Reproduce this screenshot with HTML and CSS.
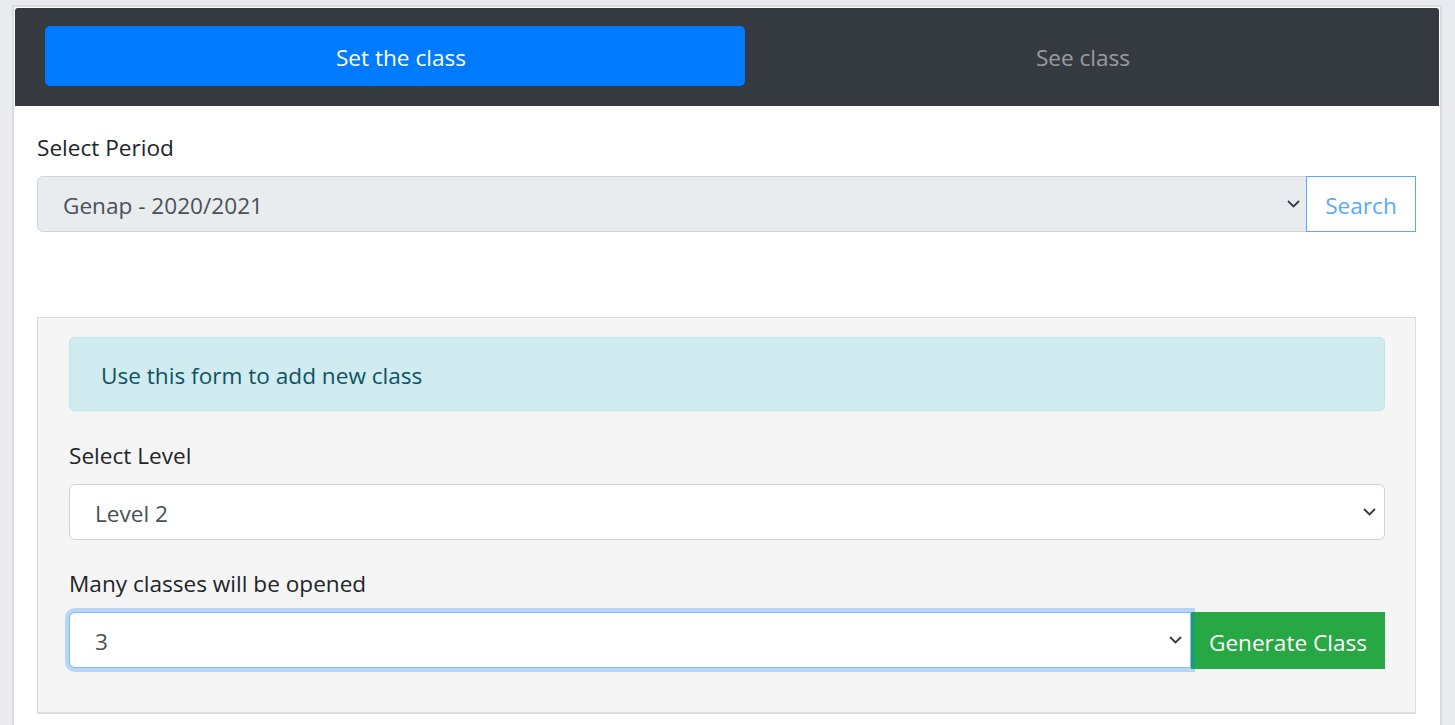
FILE: index.html
```html
<!DOCTYPE html>
<html lang="en">
<head>
<meta charset="utf-8">
<title>Set the class</title>
<link rel="stylesheet" href="styles.css">
</head>
<body>
<div class="page">
  <div class="card">
    <nav class="tabs">
      <a class="tab tab-active">Set the class</a>
      <a class="tab tab-muted">See class</a>
    </nav>
    <div class="card-body">
      <div class="label">Select Period</div>
      <div class="input-group">
        <div class="select select-disabled select-grow">
          <span>Genap - 2020/2021</span>
          <svg class="chev" width="13" height="8" viewBox="0 0 13 8"><path d="M1 1l5.5 5.5L12 1" fill="none" stroke="#343a40" stroke-width="1.8"/></svg>
        </div>
        <button class="btn-search">Search</button>
      </div>

      <div class="panel">
        <div class="alert">Use this form to add new class</div>

        <div class="label">Select Level</div>
        <div class="select select-level">
          <span>Level 2</span>
          <svg class="chev" width="13" height="8" viewBox="0 0 13 8"><path d="M1 1l5.5 5.5L12 1" fill="none" stroke="#343a40" stroke-width="1.8"/></svg>
        </div>

        <div class="label">Many classes will be opened</div>
        <div class="input-group">
          <div class="select select-focus select-grow">
            <span>3</span>
            <svg class="chev" width="13" height="8" viewBox="0 0 13 8"><path d="M1 1l5.5 5.5L12 1" fill="none" stroke="#343a40" stroke-width="1.8"/></svg>
          </div>
          <button class="btn-generate">Generate Class</button>
        </div>
      </div>
    </div>
  </div>
</div>
</body>
</html>
```

FILE: styles.css
```css
* { box-sizing: border-box; }

html, body {
  margin: 0;
  height: 100%;
}

body {
  background: #eaebf0;
  font-family: "Open Sans", "Noto Sans", sans-serif;
  font-size: 22.6px;
  color: #212529;
  overflow: hidden;
}

.page {
  padding: 5px 13px 0 12px;
}

.card {
  width: 1430px;
  background: #fff;
  border: 2px solid #dcdcdf;
  border-bottom: none;
  padding: 1px 1px 0 1px;
  min-height: 730px;
}

.tabs {
  display: flex;
  background: #343a40;
  border-top-left-radius: 3px;
  border-top-right-radius: 3px;
  padding: 18px 18px 20px 30px;
}

.tab {
  height: 60px;
  display: flex;
  align-items: center;
  justify-content: center;
  text-decoration: none;
  line-height: 33px;
  padding-top: 2px;
}

.tab-active {
  width: 700px;
  background: #007bff;
  color: #fff;
  border-radius: 5px;
  padding-left: 12px;
}

.tab-muted {
  flex: 1;
  color: rgba(255, 255, 255, 0.5);
}

.card-body {
  padding: 25px 23px 0 22px;
}

.label {
  line-height: 33px;
  margin-bottom: 12px;
}

.input-group {
  display: flex;
}

.select {
  height: 56px;
  display: flex;
  align-items: center;
  justify-content: space-between;
  padding: 3px 8px 0 25px;
  border: 1px solid #ced4da;
  border-radius: 6px;
  background: #fff;
  color: #495057;
  line-height: 33px;
}

.select .chev {
  margin-top: -3px;
}

.select-grow {
  flex: 1;
  border-top-right-radius: 0;
  border-bottom-right-radius: 0;
}

.select-disabled {
  background: #e9ecef;
  padding-right: 6px;
}

.chev {
  display: block;
  flex: none;
}

.btn-search {
  width: 110px;
  height: 56px;
  border: 1px solid #59a9ff;
  background: #fff;
  color: #59a9ff;
  font: inherit;
  line-height: 33px;
  padding: 3px 0 0;
  margin-left: -1px;
}

.panel {
  margin-top: 85px;
  background: #f5f5f5;
  border: 1px solid #dddddd;
  border-bottom-width: 2px;
  padding: 19px 30px 43px 31px;
}

.alert {
  background: #d1ecf1;
  border: 1px solid #bee5eb;
  border-radius: 5px;
  color: #0c5460;
  line-height: 33px;
  padding: 21px 31px 18px;
  margin-bottom: 28px;
}

.select-level {
  margin-bottom: 27px;
}

.select-focus {
  position: relative;
  z-index: 2;
  border-color: #80bdff;
  box-shadow: 0 0 0 4px rgba(0, 123, 255, 0.25);
}

.btn-generate {
  width: 194px;
  height: 57px;
  border: none;
  background: #28a745;
  color: #fff;
  font: inherit;
  line-height: 33px;
  padding: 3px 0 0 0;
}
```
